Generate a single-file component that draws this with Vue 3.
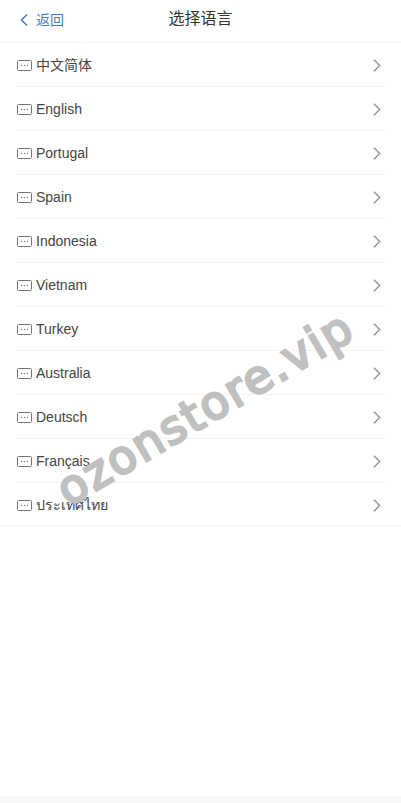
<script setup>
const languages = ['中文简体', 'English', 'Portugal', 'Spain', 'Indonesia', 'Vietnam', 'Turkey', 'Australia', 'Deutsch', 'Français', 'ประเทศไทย']
</script>

<template>
  <div class="page">
    <header class="nav">
      <a class="back">
        <svg width="10" height="14" viewBox="0 0 10 14"><path d="M8 1.5 2.5 7 8 12.5" fill="none" stroke="#3c80c4" stroke-width="1.5" /></svg>
        <span>返回</span>
      </a>
      <h1>选择语言</h1>
    </header>

    <ul class="list">
      <li v-for="lang in languages" :key="lang" class="row">
        <svg class="lang-icon" width="15" height="11" viewBox="0 0 15 11">
          <rect x="0.5" y="0.5" width="14" height="10" rx="1" fill="none" stroke="#777" />
          <path d="M4 5.5h1.2M6.9 5.5h1.2M9.8 5.5H11" stroke="#777" />
        </svg>
        <span class="name" :class="{ thai: lang === 'ประเทศไทย' }">{{ lang }}</span>
        <svg class="arrow" width="8" height="13" viewBox="0 0 8 13"><path d="M1 .8l5.6 5.7L1 12.2" fill="none" stroke="#999" stroke-width="1.5" /></svg>
      </li>
    </ul>

    <div class="mark">ozonstore.vip</div>
    <div class="spacer"></div>
    <div class="foot"></div>
  </div>
</template>

<style scoped>
.page {
  height: 803px;
  display: flex;
  flex-direction: column;
  position: relative;
  overflow: hidden;
  background: #fff;
  font-family: "Liberation Sans", "Noto Sans CJK SC", sans-serif;
  color: #444;
}

.nav {
  height: 42px;
  flex: none;
  display: flex;
  align-items: center;
  justify-content: center;
  position: relative;
  border-bottom: 1px solid #f3f3f3;
}

.nav h1 {
  margin: 0 0 4px;
  font-size: 16px;
  line-height: 20px;
  font-weight: 400;
  color: #333;
}

.back {
  position: absolute;
  left: 19px;
  top: 13px;
  display: flex;
  align-items: center;
  gap: 7px;
  font-size: 14px;
  line-height: 14px;
  color: #3c80c4;
}

.list {
  list-style: none;
  margin: 0;
  padding: 0;
  border-bottom: 2px solid #f9f9f9;
}

.row {
  height: 44px;
  margin: 0 16px;
  box-sizing: border-box;
  display: flex;
  align-items: center;
  border-bottom: 1px solid #f3f3f3;
  font-size: 14px;
}

.row:last-child {
  height: 42px;
  padding-top: 2px;
  border-bottom: 0;
}

.lang-icon {
  flex: none;
  margin: 1px 4px 0 1px;
}

.name {
  flex: 1;
  line-height: 20px;
}

.thai {
  font-size: 14.2px;
}

.arrow {
  flex: none;
  margin: 1px 4px 0 0;
}

.mark {
  position: absolute;
  left: 25px;
  top: 383px;
  width: 360px;
  text-align: center;
  font-family: "DejaVu Sans", sans-serif;
  font-size: 46px;
  line-height: 50px;
  letter-spacing: 2px;
  white-space: nowrap;
  color: #c0c0c0;
  -webkit-text-stroke: 2.6px #c0c0c0;
  transform: rotate(-30.5deg);
}

.spacer {
  flex: 1;
}

.foot {
  height: 7px;
  flex: none;
  background: #f8f8f8;
}
</style>
